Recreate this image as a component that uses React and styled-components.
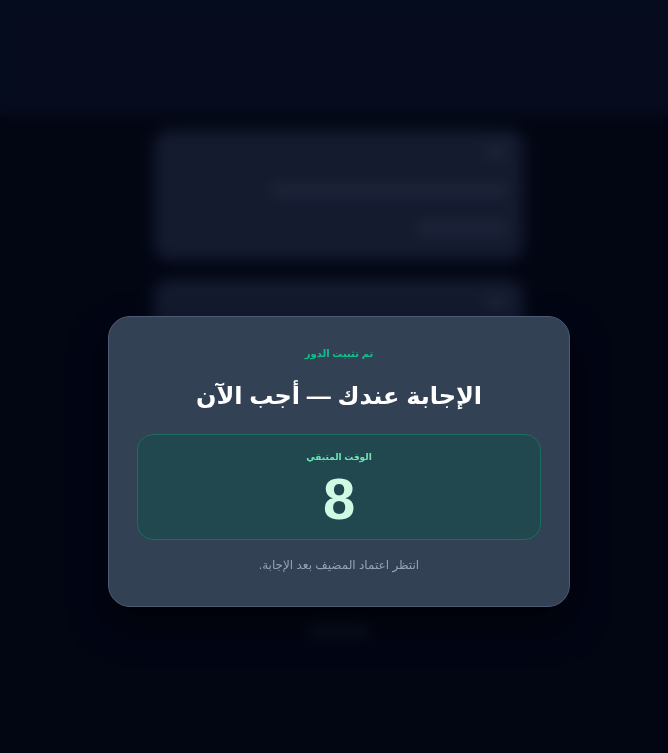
import React from 'react';
import styled, { createGlobalStyle } from 'styled-components';

const GlobalStyle = createGlobalStyle`
  html, body {
    margin: 0;
    padding: 0;
    background: #03060f;
  }
  body {
    font-family: "Liberation Sans", "DejaVu Sans", "Noto Sans", sans-serif;
  }
`;

const Page = styled.div`
  min-height: 100vh;
  background: #03060f;
  direction: rtl;
`;

const Header = styled.header`
  height: 115px;
  background: #0a1224;
`;

const Main = styled.main`
  width: 370px;
  margin: 15px auto 0;
  padding-left: 10px;
  display: flex;
  flex-direction: column;
  gap: 20px;
`;

const Card = styled.section`
  height: ${(p) => p.$h}px;
  background: #263046;
  border-radius: 16px;
  padding: 16px 18px;
  box-sizing: border-box;
  display: flex;
  flex-direction: column;
  gap: 26px;
`;

const Ghost = styled.div`
  height: 12px;
  width: ${(p) => p.$w}px;
  background: #3a455c;
  border-radius: 4px;
`;

const FooterGhost = styled.div`
  margin: 26px auto 0;
  width: 60px;
  height: 10px;
  background: #1b2336;
  border-radius: 4px;
`;

const Overlay = styled.div`
  position: fixed;
  inset: 0;
  background: rgba(2, 6, 23, 0.5);
  backdrop-filter: blur(7px);
  display: flex;
  align-items: flex-start;
  justify-content: center;
  padding: 316px 0 0 10px;
  box-sizing: border-box;
`;

const Modal = styled.div`
  width: 462px;
  box-sizing: border-box;
  background: #334155;
  border: 1px solid #4d5b73;
  border-radius: 22px;
  padding: 29px 28px 32px;
  text-align: center;
  direction: rtl;
  box-shadow: 0 18px 36px rgba(0, 0, 0, 0.5);
`;

const Eyebrow = styled.div`
  font-size: 10px;
  line-height: 16px;
  font-weight: 700;
  color: #10c08a;
`;

const Title = styled.h2`
  margin: 15px 0 0;
  font-size: 24px;
  line-height: 38px;
  font-weight: 700;
  color: #ffffff;
`;

const TimerBox = styled.div`
  margin-top: 19px;
  background: #21474f;
  border: 1px solid #1d6d5c;
  border-radius: 16px;
  padding: 14px 0 10px;
  display: flex;
  flex-direction: column;
  align-items: center;
  gap: 4px;
`;

const TimerLabel = styled.div`
  font-size: 9px;
  line-height: 16px;
  font-weight: 700;
  color: #6ee7b7;
`;

const TimerValue = styled.div`
  font-size: 58px;
  line-height: 60px;
  font-weight: 700;
  color: #d1fae5;
`;

const Note = styled.p`
  margin: 16px 0 0;
  font-size: 12px;
  line-height: 18px;
  color: #94a3b8;
`;

export default function App() {
  return (
    <>
      <GlobalStyle />
      <Page>
        <Header />
        <Main>
          <Card $h={130}>
            <Ghost $w={20} />
            <Ghost $w={235} />
            <Ghost $w={90} />
          </Card>
          <Card $h={300}>
            <Ghost $w={20} />
            <Ghost $w={200} />
          </Card>
          <FooterGhost />
        </Main>
      </Page>
      <Overlay>
        <Modal>
          <Eyebrow>تم تثبيت الدور</Eyebrow>
          <Title>الإجابة عندك — أجب الآن</Title>
          <TimerBox>
            <TimerLabel>الوقت المتبقي</TimerLabel>
            <TimerValue>8</TimerValue>
          </TimerBox>
          <Note>انتظر اعتماد المضيف بعد الإجابة.</Note>
        </Modal>
      </Overlay>
    </>
  );
}
